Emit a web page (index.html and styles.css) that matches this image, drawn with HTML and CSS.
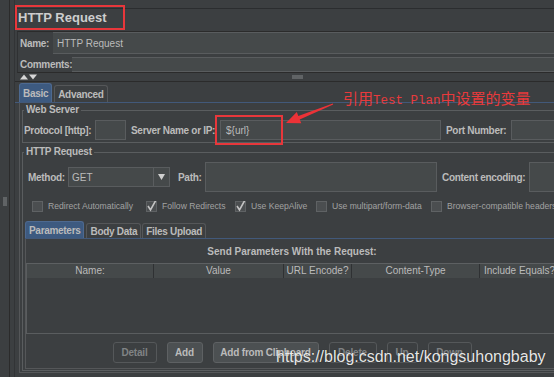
FILE: index.html
```html
<!DOCTYPE html>
<html lang="zh-CN">
<head>
  <meta charset="UTF-8" />
  <meta name="viewport" content="width=device-width, initial-scale=1.0"/>
  <title>HTTP Request</title>
  <link rel="stylesheet" href="styles.css">
</head>
<body>
  <div class="app">
    <div class="side"><span class="grip-v"></span></div>
    <div class="gutter"></div>

    <div class="main">
      <div class="title-row"><h1>HTTP Request</h1></div>

      <div class="meta">
        <div class="meta-row name-row">
          <label>Name:</label>
          <div class="field">HTTP Request</div>
        </div>
        <div class="meta-row comment-row">
          <label>Comments:</label>
          <div class="field"></div>
        </div>
      </div>

      <div class="splitter">
        <svg class="updown" width="18" height="6" viewBox="0 0 18 6">
          <polygon points="0,5.5 4,0.5 8,5.5"/>
          <polygon points="9,0.5 17,0.5 13,5.5"/>
        </svg>
        <span class="grip-h"></span>
      </div>

      <div class="tabs">
        <span class="tab active">Basic</span>
        <span class="tab">Advanced</span>
      </div>

      <div class="tab-body">
        <fieldset class="group web-server">
          <legend>Web Server</legend>
          <div class="row">
            <label class="lbl-protocol">Protocol [http]:</label>
            <div class="field f-protocol"></div>
            <label class="lbl-server">Server Name or IP:</label>
            <div class="field f-server">${url}</div>
            <label class="lbl-port">Port Number:</label>
            <div class="field f-port"></div>
          </div>
        </fieldset>

        <fieldset class="group http-req">
          <legend>HTTP Request</legend>
          <div class="row method-row">
            <label class="lbl-method">Method:</label>
            <div class="field combo">
              <span class="combo-text">GET</span>
              <span class="combo-btn">
                <svg width="7" height="6" viewBox="0 0 7 6"><polygon points="0,0 7,0 3.5,6"/></svg>
              </span>
            </div>
            <label class="lbl-path">Path:</label>
            <div class="field f-path"></div>
            <label class="lbl-enc">Content encoding:</label>
            <div class="field f-enc"></div>
          </div>

          <div class="checks">
            <span class="check-item c-redirect"><span class="check"></span>Redirect Automatically</span>
            <span class="check-item c-follow"><span class="check"><svg width="11" height="11" viewBox="0 0 11 11"><path d="M2 5 L4.5 9 L10 -1"/></svg></span>Follow Redirects</span>
            <span class="check-item c-alive"><span class="check"><svg width="11" height="11" viewBox="0 0 11 11"><path d="M2 5 L4.5 9 L10 -1"/></svg></span>Use KeepAlive</span>
            <span class="check-item c-multi"><span class="check"></span>Use multipart/form-data</span>
            <span class="check-item"><span class="check"></span>Browser-compatible headers</span>
          </div>

          <div class="subtabs">
            <span class="tab active">Parameters</span>
            <span class="tab">Body Data</span>
            <span class="tab">Files Upload</span>
          </div>

          <div class="subpanel">
            <div class="panel-title">Send Parameters With the Request:</div>
            <div class="table">
              <div class="thead">
                <span>Name:</span>
                <span>Value</span>
                <span>URL Encode?</span>
                <span>Content-Type</span>
                <span>Include Equals?</span>
              </div>
              <div class="tbody"></div>
            </div>
            <div class="buttons">
              <span class="btn disabled b-detail">Detail</span>
              <span class="btn b-add">Add</span>
              <span class="btn b-clip">Add from Clipboard</span>
              <span class="btn disabled b-delete">Delete</span>
              <span class="btn disabled b-up">Up</span>
              <span class="btn disabled b-down">Down</span>
            </div>
          </div>
        </fieldset>
      </div>
    </div>

    <!-- annotations drawn over the screenshot -->
    <div class="note-box box-title"></div>
    <div class="note-box box-url"></div>
    <svg class="note-arrow" width="554" height="377" viewBox="0 0 554 377">
      <polygon points="286,123 296.8,112.1 298.3,116 332.8,103.5 333.2,104.5 299.7,119.4 301.3,123.3"/>
    </svg>
    <div class="note-text">引用<span class="mono">Test Plan</span>中设置的变量</div>
    <div class="watermark">https://blog.csdn.net/kongsuhongbaby</div>
  </div>
</body>
</html>
```

FILE: styles.css
```css
* {
  box-sizing: border-box;
}
body {
  margin: 0;
  background: #3c3f41;
  font-family: "Liberation Sans", Arial, sans-serif;
  font-size: 10px;
  color: #bbbbbb;
}
.app {
  position: relative;
  width: 554px;
  height: 377px;
  overflow: hidden;
  display: flex;
}
.side {
  width: 10px;
  flex-shrink: 0;
  border-right: 1px solid #2b2b2b;
  display: flex;
  align-items: center;
  justify-content: center;
}
.grip-v {
  width: 4px;
  height: 9px;
  margin-top: 25px;
  background-image: radial-gradient(circle, #8a8d8f 0.6px, transparent 0.8px);
  background-size: 2px 2px;
}
.gutter {
  width: 5px;
  flex-shrink: 0;
  border-right: 1px solid #323436;
}
.main {
  width: 548px;
  flex-shrink: 0;
  display: flex;
  flex-direction: column;
}
.title-row {
  margin-top: 8px;
  border-top: 1px solid #2b2d2f;
  padding: 0 0 5px 3px;
}
.title-row h1 {
  margin: 0;
  font-size: 13px;
  line-height: 17px;
  color: #cdcdcd;
}
label {
  font-weight: bold;
  letter-spacing: -0.3px;
  white-space: nowrap;
  flex-shrink: 0;
}
.field {
  background: #45494a;
  border: 1px solid #595c5e;
  color: #bbbbbb;
  display: flex;
  align-items: center;
  white-space: nowrap;
  overflow: hidden;
  flex-shrink: 0;
}

/* name / comments */
.meta {
  margin-left: 2px;
  border-top: 1px solid #2b2b2b;
  border-bottom: 1px solid #2b2b2b;
  border-left: 1px solid #2f3133;
  display: flex;
  flex-direction: column;
  gap: 3px;
}
.meta-row {
  display: flex;
}
.meta-row label {
  padding-left: 2px;
  display: flex;
  align-items: center;
}
.meta .field {
  flex: 1;
  padding-left: 4px;
  border-left: none;
  border-right: none;
}
.name-row {
  height: 22px;
}
.name-row label {
  width: 35px;
}
.comment-row {
  height: 15px;
}
.comment-row label {
  width: 54px;
}
.splitter {
  height: 9px;
  border-bottom: 1px solid #2b2b2b;
  display: flex;
  align-items: center;
  padding-left: 5px;
}
.updown {
  fill: #d6d6d6;
}
.grip-h {
  width: 11px;
  height: 4px;
  margin-left: 254px;
  background-image: radial-gradient(circle, #8a8d8f 0.6px, transparent 0.8px);
  background-size: 2px 2px;
}

/* tabs */
.tabs,
.subtabs {
  display: flex;
  align-items: flex-end;
  gap: 2px;
  border-bottom: 1px solid #42597a;
}
.tabs {
  height: 21px;
  padding-left: 4px;
}
.tab {
  height: 17px;
  padding: 0 3px;
  border: 1px solid #555759;
  border-bottom: none;
  border-radius: 3px 3px 0 0;
  font-weight: bold;
  letter-spacing: -0.3px;
  display: flex;
  align-items: center;
  white-space: nowrap;
}
.tab.active {
  height: 19px;
  background: #3d5a80;
  border-color: #4d6990;
}
.tab-body {
  margin-left: 4px;
  border-left: 1px solid #555759;
  border-bottom: 1px solid #555759;
  padding: 1px 0 1px 2px;
}
.group {
  margin: 0;
  padding: 0;
  min-width: 0;
  border: 1px solid #5a5d5f;
}
.group legend {
  margin-left: 1px;
  padding: 0 2px;
  font-weight: bold;
  letter-spacing: -0.2px;
  line-height: 12px;
}
.row {
  display: flex;
  align-items: center;
}

/* web server */
.web-server .row {
  height: 20px;
  margin: 4px 0 2px;
  padding-left: 1px;
}
.lbl-protocol { width: 71px; }
.f-protocol { width: 31px; height: 20px; }
.lbl-server { width: 89px; margin-left: 5px; }
.f-server { width: 221px; height: 20px; padding-left: 5px; }
.lbl-port { width: 65px; margin-left: 5px; }
.f-port { width: 60px; height: 20px; }

/* http request */
.http-req {
  margin-top: 3px;
  padding-bottom: 1px;
}
.method-row {
  height: 30px;
  margin-top: 4px;
  padding-left: 5px;
}
.lbl-method { width: 40px; }
.combo {
  width: 102px;
  height: 20px;
  align-items: stretch;
}
.combo-text {
  flex: 1;
  padding-left: 3px;
  display: flex;
  align-items: center;
}
.combo-btn {
  width: 16px;
  border-left: 1px solid #5a5d5f;
  display: flex;
  align-items: center;
  justify-content: center;
  fill: #cfcfcf;
}
.lbl-path { width: 27px; margin-left: 8px; }
.f-path { width: 232px; height: 30px; }
.lbl-enc { width: 87px; margin-left: 5px; }
.f-enc { width: 60px; height: 30px; }

.checks {
  height: 12px;
  margin-top: 8px;
  padding-left: 9px;
  display: flex;
  align-items: center;
  font-size: 8.6px;
  color: #a2a2a2;
  white-space: nowrap;
}
.check-item {
  display: flex;
  align-items: center;
  flex-shrink: 0;
  overflow: hidden;
}
.c-redirect { width: 114px; }
.c-follow { width: 89px; }
.c-alive { width: 81px; }
.c-multi { width: 115px; }
.check {
  width: 11px;
  height: 11px;
  margin-right: 5px;
  background: #4b4e50;
  border: 1px solid #5f6264;
  flex-shrink: 0;
  display: flex;
  overflow: visible;
}
.check svg {
  overflow: visible;
  margin: -1px 0 0 -1px;
  fill: none;
  stroke: #c4c4c4;
  stroke-width: 1.6;
}
.subtabs {
  height: 19px;
  margin: 8px 0 0 2px;
  gap: 1px;
}
.subtabs .tab {
  height: 15px;
}
.subtabs .tab.active {
  height: 17px;
  margin-right: 1px;
}
.subpanel {
  width: 533px;
  margin-left: 2px;
  border-left: 1px solid #555759;
  border-bottom: 1px solid #555759;
  padding: 7px 0 5px;
}
.panel-title {
  text-align: center;
  font-weight: bold;
  line-height: 12px;
}
.table {
  margin-top: 5px;
  border-left: 1px solid #5a5d5f;
}
.thead {
  display: grid;
  grid-template-columns: 127px 130px 68px 128px 80px;
  height: 15px;
  background: #45494a;
  border-top: 1px solid #5d6062;
}
.thead span {
  text-align: center;
  line-height: 14px;
  border-right: 1px solid #2f3133;
  white-space: nowrap;
}
.tbody {
  height: 56px;
  border-bottom: 1px solid #5a5d5f;
}
.buttons {
  margin-top: 8px;
  height: 21px;
  display: flex;
  justify-content: center;
  gap: 10px;
}
.btn {
  border: 1px solid #5e6163;
  border-radius: 3px;
  background: #4c5052;
  font-weight: bold;
  letter-spacing: -0.2px;
  display: flex;
  align-items: center;
  justify-content: center;
  white-space: nowrap;
}
.btn.disabled {
  background: transparent;
  border-color: #55585a;
  color: #808385;
}
.b-detail { width: 44px; }
.b-add { width: 36px; }
.b-clip { width: 106px; }
.b-delete { width: 48px; }
.b-up { width: 31px; }
.b-down { width: 44px; }

/* annotations */
.note-box {
  position: absolute;
  border: 2px solid #e8373b;
}
.box-title {
  left: 15px;
  top: 5px;
  width: 110px;
  height: 25px;
}
.box-url {
  left: 215px;
  top: 115px;
  width: 68px;
  height: 30px;
}
.note-arrow {
  position: absolute;
  left: 0;
  top: 0;
  fill: #ec3237;
}
.note-text {
  position: absolute;
  left: 343px;
  top: 89px;
  font-family: "Noto Sans CJK SC", sans-serif;
  font-size: 15px;
  line-height: 18px;
  color: #e83a3c;
  white-space: nowrap;
}
.note-text .mono {
  font-family: "Liberation Mono", monospace;
  font-size: 12.5px;
}
.watermark {
  position: absolute;
  left: 276px;
  top: 348px;
  font-size: 16px;
  line-height: 18px;
  color: rgba(255, 255, 255, 0.9);
  text-shadow: 0 0 1px rgba(0, 0, 0, 0.5);
  white-space: nowrap;
}
```
